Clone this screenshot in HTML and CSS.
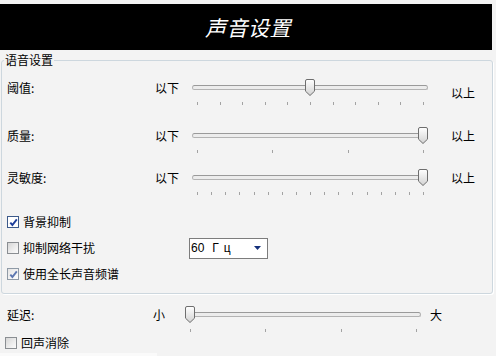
FILE: index.html
```html
<!DOCTYPE html>
<html lang="zh-CN">
<head>
<meta charset="utf-8">
<title>声音设置</title>
<link rel="stylesheet" href="styles.css">
</head>
<body>
<div class="title-bar"><h1 class="title">声音设置</h1></div>

<fieldset class="group">
  <legend class="group-legend">语音设置</legend>

  <div class="srow srow-1">
    <span class="lbl">阈值:</span>
    <span class="lo">以下</span>
    <div class="slider" style="--v:0.5">
      <div class="track"></div>
      <svg class="thumb" viewBox="0 0 10 17" width="10" height="17"><defs><linearGradient id="tg1" x1="0" y1="0" x2="0" y2="1"><stop offset="0" stop-color="#ffffff"/><stop offset="1" stop-color="#d2d2d2"/></linearGradient></defs><path d="M0.5 2 Q0.5 0.5 2 0.5 H8 Q9.5 0.5 9.5 2 V12.2 L5 16.5 L0.5 12.2 Z" fill="url(#tg1)" stroke="#6e6e6e"/></svg>
      <div class="ticks"><i></i><i></i><i></i><i></i><i></i><i></i><i></i><i></i><i></i><i></i><i></i></div>
    </div>
    <span class="hi hi-down">以上</span>
  </div>

  <div class="srow srow-2">
    <span class="lbl">质量:</span>
    <span class="lo">以下</span>
    <div class="slider" style="--v:1">
      <div class="track"></div>
      <svg class="thumb" viewBox="0 0 10 17" width="10" height="17"><defs><linearGradient id="tg2" x1="0" y1="0" x2="0" y2="1"><stop offset="0" stop-color="#ffffff"/><stop offset="1" stop-color="#d2d2d2"/></linearGradient></defs><path d="M0.5 2 Q0.5 0.5 2 0.5 H8 Q9.5 0.5 9.5 2 V12.2 L5 16.5 L0.5 12.2 Z" fill="url(#tg2)" stroke="#6e6e6e"/></svg>
      <div class="ticks"><i></i><i></i><i></i><i></i></div>
    </div>
    <span class="hi">以上</span>
  </div>

  <div class="srow srow-3">
    <span class="lbl">灵敏度:</span>
    <span class="lo">以下</span>
    <div class="slider" style="--v:1">
      <div class="track"></div>
      <svg class="thumb" viewBox="0 0 10 17" width="10" height="17"><defs><linearGradient id="tg3" x1="0" y1="0" x2="0" y2="1"><stop offset="0" stop-color="#ffffff"/><stop offset="1" stop-color="#d2d2d2"/></linearGradient></defs><path d="M0.5 2 Q0.5 0.5 2 0.5 H8 Q9.5 0.5 9.5 2 V12.2 L5 16.5 L0.5 12.2 Z" fill="url(#tg3)" stroke="#6e6e6e"/></svg>
      <div class="ticks"><i></i><i></i><i></i><i></i><i></i><i></i><i></i><i></i><i></i><i></i><i></i><i></i><i></i><i></i><i></i><i></i><i></i></div>
    </div>
    <span class="hi">以上</span>
  </div>

  <div class="crow crow-first">
    <span class="cb cb-on"><svg viewBox="0 0 9 9" width="9" height="9"><path d="M1.3 4.6 L3.4 7 L7.8 1.4" fill="none" stroke="#1f3f9a" stroke-width="1.9"/></svg></span>
    <span class="ctext">背景抑制</span>
  </div>

  <div class="crow crow-combo">
    <div class="cgroup">
      <span class="cb"></span>
      <span class="ctext">抑制网络干扰</span>
    </div>
    <div class="combo">
      <span class="combo-val">60<span class="hz">Гц</span></span>
      <svg class="combo-arrow" viewBox="0 0 7 4" width="7" height="4"><path d="M0 0 H7 L3.5 4 Z" fill="#14307a"/></svg>
    </div>
  </div>

  <div class="crow">
    <span class="cb cb-dim"><svg viewBox="0 0 9 9" width="9" height="9"><path d="M1.3 4.6 L3.4 7 L7.8 1.4" fill="none" stroke="#5d77b0" stroke-width="1.9"/></svg></span>
    <span class="ctext">使用全长声音频谱</span>
  </div>
</fieldset>

<div class="srow delay-row">
  <span class="lbl">延迟:</span>
  <span class="lo">小</span>
  <div class="slider" style="--v:0">
    <div class="track"></div>
    <svg class="thumb" viewBox="0 0 10 17" width="10" height="17"><defs><linearGradient id="tg4" x1="0" y1="0" x2="0" y2="1"><stop offset="0" stop-color="#ffffff"/><stop offset="1" stop-color="#d2d2d2"/></linearGradient></defs><path d="M0.5 2 Q0.5 0.5 2 0.5 H8 Q9.5 0.5 9.5 2 V12.2 L5 16.5 L0.5 12.2 Z" fill="url(#tg4)" stroke="#6e6e6e"/></svg>
    <div class="ticks"><i></i><i></i><i></i><i></i></div>
  </div>
  <span class="hi">大</span>
</div>

<div class="crow echo-row">
  <span class="cb"></span>
  <span class="ctext">回声消除</span>
</div>
<div class="foot-strip"></div>
</body>
</html>
```

FILE: styles.css
```css
html, body {
  margin: 0;
  padding: 0;
}
body {
  width: 496px;
  height: 356px;
  overflow: hidden;
  background: #f3f3f3;
  color: #000;
  font-family: "Noto Sans CJK SC", "Liberation Sans", sans-serif;
  font-size: 12px;
  line-height: 14px;
}

.title-bar {
  margin-top: 4px;
  width: 492px;
  height: 46px;
  background: #000;
  display: flex;
  align-items: center;
  justify-content: center;
}
.title {
  margin: 0;
  color: #fff;
  font-size: 21px;
  line-height: 24px;
  font-weight: normal;
  font-style: italic;
  letter-spacing: 0.5px;
  padding-left: 4px;
}

.group {
  margin: 3px 3px 0 1px;
  padding: 0 0 6px 0;
  min-width: 0;
  border: 1px solid #cdd7de;
  border-radius: 3px;
  box-shadow: 1px 1px 0 #ffffff;
}
.group-legend {
  margin-left: 2px;
  padding: 0 1px;
  font-size: 12px;
  line-height: 14px;
}

/* slider rows */
.srow {
  display: grid;
  grid-template-columns: 148px 37px 236px auto;
  align-items: start;
  padding-left: 5px;
  height: 26px;
}
.srow-1 { margin-top: 12px; }
.srow-2 { margin-top: 22px; }
.srow-3 { margin-top: 16px; }

.lbl, .lo, .hi {
  line-height: 17px;
  white-space: nowrap;
}
.hi { margin-left: 23px; }
.hi-down { padding-top: 5px; }

.slider {
  position: relative;
  height: 26px;
}
.track {
  margin-top: 6px;
  height: 5px;
  box-sizing: border-box;
  border: 1px solid #b3b3b3;
  border-top-color: #9a9a9a;
  border-radius: 3px;
  background: #ececec;
}
.thumb {
  position: absolute;
  top: 0;
  left: calc(var(--v) * (100% - 10px));
  display: block;
}
.ticks {
  margin: 12px 4px 0 5px;
  display: flex;
  justify-content: space-between;
}
.ticks i {
  display: block;
  width: 1px;
  height: 3px;
  background: #a3a3a3;
}

/* checkbox rows */
.crow {
  display: flex;
  align-items: center;
  height: 26px;
  padding-left: 5px;
}
.crow-first { margin-top: 14px; }
.crow-combo {
  display: grid;
  grid-template-columns: 182px auto;
  align-items: center;
}
.cgroup {
  display: flex;
  align-items: center;
}
.cb {
  width: 12px;
  height: 12px;
  box-sizing: border-box;
  border: 1px solid #8a8e92;
  background: linear-gradient(135deg, #d6d6d6 0%, #eeeeee 60%, #fbfbfb 100%);
  margin-right: 4px;
  display: flex;
  align-items: center;
  justify-content: center;
  flex: none;
}
.cb svg { display: block; }
.cb-on {
  border-color: #3c5a8a;
  background: #ffffff;
}
.cb-dim {
  border-color: #8f9aa6;
  background: linear-gradient(135deg, #e4e4e4 0%, #f4f4f4 60%, #fdfdfd 100%);
}
.ctext {
  white-space: nowrap;
}

.combo {
  width: 79px;
  height: 21px;
  box-sizing: border-box;
  border: 1px solid #7c7c7c;
  background: #fff;
  display: flex;
  align-items: center;
  justify-content: space-between;
  padding: 0 6px 0 1px;
}
.combo-val {
  font-family: "Liberation Sans", "Noto Sans", sans-serif;
  font-size: 12px;
}
.hz {
  margin-left: 8px;
  letter-spacing: 5px;
}
.combo-arrow { display: block; }

/* delay */
.delay-row {
  grid-template-columns: 146px 32px 236px auto;
  padding-left: 7px;
  margin-top: 12px;
}
.delay-row .hi { margin-left: 9px; }

.echo-row {
  height: 21px;
  padding-left: 5px;
}
.echo-row .cb { margin-right: 4px; }

.foot-strip {
  margin-top: 0px;
  width: 157px;
  height: 3px;
  background: #fafafa;
}
```
